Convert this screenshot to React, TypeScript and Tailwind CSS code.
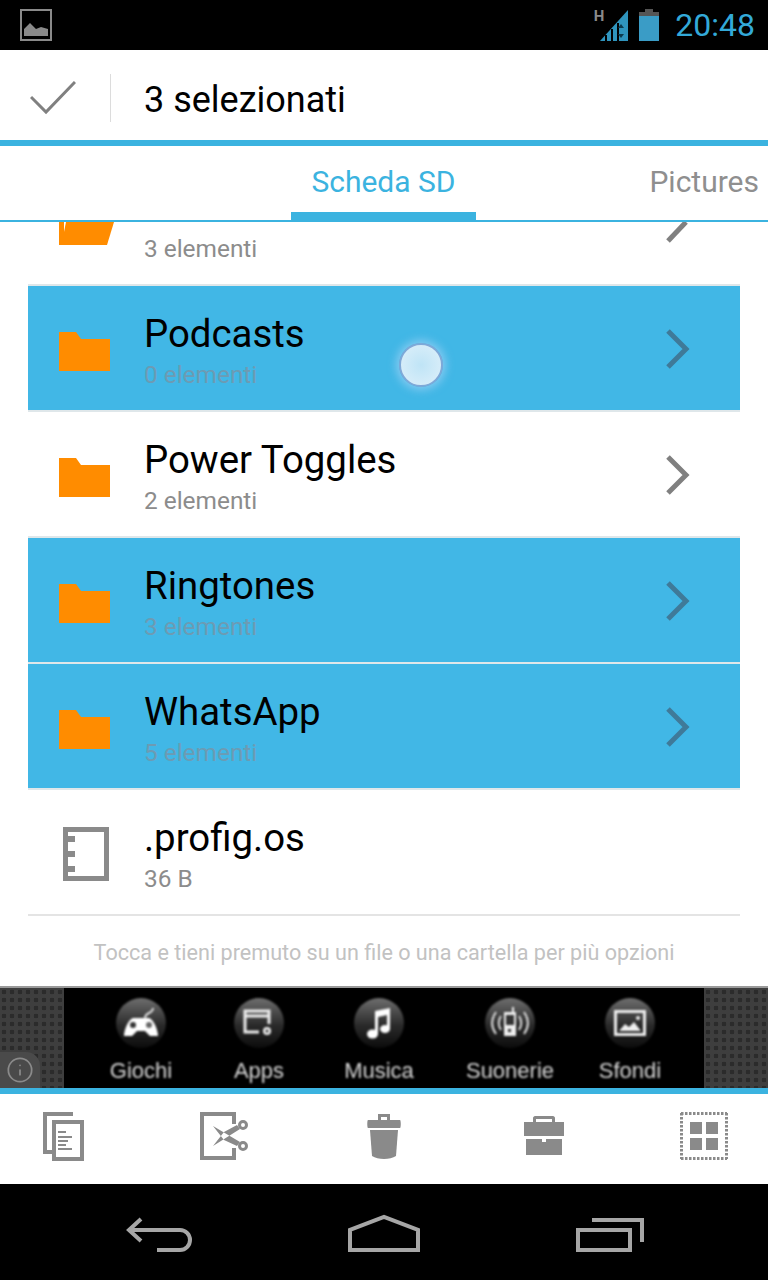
import { Info } from 'lucide-react';

const rows = [
    { name: 'Podcasts', sub: '0 elementi', selected: true },
    { name: 'Power Toggles', sub: '2 elementi', selected: false },
    { name: 'Ringtones', sub: '3 elementi', selected: true },
    { name: 'WhatsApp', sub: '5 elementi', selected: true },
];

function Chevron({ dark }: { dark?: boolean }) {
    return (
        <svg width="28" height="42" viewBox="0 0 28 42" fill="none" stroke={dark ? '#3f7a99' : '#808080'} strokeWidth="5" className="shrink-0">
            <path d="M4 3L22 21L4 39" />
        </svg>
    );
}

function Folder() {
    return (
        <svg width="52" height="40" viewBox="0 0 52 40" fill="#ff8c00" className="shrink-0">
            <path d="M0 0H17L22 7H51V39H0Z" />
        </svg>
    );
}

function FileRow({ name, sub, selected }: { name: string; sub: string; selected: boolean }) {
    return (
        <div className={`mx-[28px] h-[126px] border-b-2 border-[#dfe7ea] flex items-center ${selected ? 'bg-[#41b7e6]' : 'bg-white'}`}>
            <div className="w-[116px] pl-[31px] pt-[8px] flex shrink-0"><Folder /></div>
            <div className="flex-1 mt-[6px]">
                <div className="text-[38.4px] leading-[42px] text-black">{name}</div>
                <div className={`text-[24.4px] leading-[28px] mt-[6px] ${selected ? 'text-[#6d9bb3]' : 'text-[#8c8c8c]'}`}>{sub}</div>
            </div>
            <div className="pr-[48px] pt-[2px]"><Chevron dark={selected} /></div>
        </div>
    );
}

function AdItem({ label, width, children }: { label: string; width: string; children: React.ReactNode }) {
    return (
        <div className={`flex flex-col items-center ${width}`}>
            <div className="w-[50px] h-[50px] rounded-full bg-[linear-gradient(#6e6e6e,#2a2a2a_55%,#0c0c0c)] flex items-center justify-center">
                {children}
            </div>
            <div className="text-[22px] leading-[24px] mt-[11px] text-[#d8d8d8]">{label}</div>
        </div>
    );
}

function AdSide() {
    return <div className="w-[64px] shrink-0 bg-[#3e3e3e] bg-[radial-gradient(#2b2b2b_38%,transparent_46%)] bg-[length:8px_8px]" />;
}

export default function App() {
    return (
        <div className="relative w-[768px] h-[1280px] overflow-hidden bg-white font-['Roboto',sans-serif]">
            {/* status bar */}
            <div className="h-[50px] bg-black flex items-center justify-between pl-[20px] pr-[13px]">
                <svg width="32" height="32" viewBox="0 0 32 32" fill="none">
                    <rect x="1" y="1" width="30" height="30" stroke="#8a8a8a" strokeWidth="2" />
                    <path d="M4 27V20L10 14L16 20L21 18L28 20V27Z" fill="#8a8a8a" />
                </svg>
                <div className="flex items-center">
                    <span className="text-[15px] leading-[15px] font-bold text-[#8a8a8a] self-start mt-[4px] mr-[-6px]">H</span>
                    <svg width="30" height="32" viewBox="0 0 30 32" className="mt-[1px]">
                        <path d="M2 31L30 0V31Z" fill="#2f94bd" />
                        <path d="M8 31V25M14 31V19M20 31V13" stroke="#000" strokeWidth="2" />
                        <path d="M23 14L26 18H20ZM23 28L26 24H20Z" fill="#0d3a4d" />
                    </svg>
                    <svg width="20" height="32" viewBox="0 0 20 32" className="ml-[11px]">
                        <rect x="6" y="0" width="8" height="3" fill="#555" />
                        <rect x="0" y="3" width="20" height="4" fill="#555" />
                        <rect x="0" y="7" width="20" height="25" fill="#3a9cc6" />
                    </svg>
                    <span className="text-[32px] leading-[40px] text-[#33a9d8] ml-[16px]">20:48</span>
                </div>
            </div>

            {/* action mode bar */}
            <div className="h-[90px] pt-[6px] flex items-center">
                <div className="w-[110px] flex justify-center pr-[4px] shrink-0">
                    <svg width="46" height="34" viewBox="0 0 46 34" fill="none" stroke="#808080" strokeWidth="3">
                        <path d="M1 16L16 31L45 1" />
                    </svg>
                </div>
                <div className="w-[1px] h-[48px] bg-[#dcdcdc]" />
                <div className="ml-[33px] mt-[4px] text-[36px] text-black">3 selezionati</div>
            </div>
            <div className="h-[6px] bg-[#3bb3e0]" />

            {/* tabs */}
            <div className="relative h-[76px] border-b-2 border-[#3bb3e0] flex justify-end">
                <div className="absolute left-[291px] bottom-0 w-[185px] h-[8px] bg-[#3bb3e0]" />
                <div className="absolute left-[291px] w-[185px] top-[14px] text-center text-[30px] leading-[44px] text-[#3bb3e0]">Scheda SD</div>
                <div className="pr-[9px] pt-[14px] text-[30px] leading-[44px] text-[#8f8f8f]">Pictures</div>
            </div>

            {/* list */}
            <div className="h-[764px] overflow-hidden">
                <div className="mx-[28px] h-[64px] border-b-2 border-[#dfe7ea] flex">
                    <div className="w-[116px] pl-[31px] shrink-0">
                        <svg width="56" height="24" viewBox="0 0 56 24" fill="#ff8c00" className="block">
                            <path d="M0 0H55L48 23H0Z" />
                            <path d="M5 0H7L5 10Z" fill="#fff" />
                        </svg>
                    </div>
                    <div className="flex-1 text-[24.4px] leading-[28px] text-[#8c8c8c] mt-[13px]">3 elementi</div>
                    <div className="pr-[48px]">
                        <svg width="28" height="22" viewBox="0 0 28 22" fill="none" stroke="#808080" strokeWidth="5" className="block">
                            <path d="M22 0L4 19" />
                        </svg>
                    </div>
                </div>
                {rows.map((row) => (
                    <FileRow key={row.name} {...row} />
                ))}
                <div className="mx-[28px] h-[126px] border-b-2 border-[#e4e4e4] flex items-center">
                    <div className="w-[116px] pl-[35px] pt-[4px] flex shrink-0">
                        <svg width="46" height="54" viewBox="0 0 46 54" fill="none">
                            <rect x="2.5" y="2.5" width="41" height="49" stroke="#8a8a8a" strokeWidth="5" />
                            <path d="M2 9H12V15H2ZM2 24H12V30H2ZM2 39H12V45H2Z" fill="#8a8a8a" />
                        </svg>
                    </div>
                    <div className="flex-1 mt-[6px]">
                        <div className="text-[38.4px] leading-[42px] text-black">.profig.os</div>
                        <div className="text-[24.4px] leading-[28px] mt-[6px] text-[#8c8c8c]">36 B</div>
                    </div>
                </div>
                <div className="text-center text-[21.6px] leading-[28px] pt-[23px] text-[#c2c2c2]">Tocca e tieni premuto su un file o una cartella per più opzioni</div>
            </div>

            {/* ad banner */}
            <div className="relative h-[102px] border-t-2 border-[#9a9a9a] bg-black flex font-['Liberation_Sans',sans-serif]">
                <AdSide />
                <div className="flex-1 pl-[18px] pt-[10px] flex blur-[0.8px]">
                    <AdItem label="Giochi" width="w-[118px]">
                        <svg width="36" height="34" viewBox="0 0 36 34" fill="#fff">
                            <path d="M22 12C22 6 30 8 30 2" fill="none" stroke="#ddd" strokeWidth="2" />
                            <path d="M10 12H26C31 14 35 24 35 30H27L22 25H14L9 30H1C1 24 5 14 10 12Z" />
                            <circle cx="10" cy="19" r="3" fill="#333" />
                            <circle cx="26" cy="19" r="3" fill="#666" />
                        </svg>
                    </AdItem>
                    <AdItem label="Apps" width="w-[118px]">
                        <svg width="32" height="30" viewBox="0 0 32 30" fill="none" stroke="#eee" strokeWidth="3">
                            <path d="M26 16V3H2V24H16M2 8H26" />
                            <circle cx="24" cy="23" r="4" fill="#eee" stroke="none" />
                            <circle cx="24" cy="23" r="1.5" fill="#333" stroke="none" />
                        </svg>
                    </AdItem>
                    <AdItem label="Musica" width="w-[122px]">
                        <svg width="28" height="32" viewBox="0 0 28 32" fill="#fff">
                            <path d="M10 4L25 1V22H22V8L13 10V27H10Z" />
                            <ellipse cx="7.5" cy="27" rx="5.5" ry="4.5" />
                            <ellipse cx="20" cy="22" rx="5" ry="4" />
                        </svg>
                    </AdItem>
                    <AdItem label="Suonerie" width="w-[140px]">
                        <svg width="44" height="42" viewBox="0 0 44 42" fill="none" stroke="#ddd" strokeWidth="2">
                            <path d="M8 10C3 17 3 25 8 32M36 10C41 17 41 25 36 32M13 14C10 18 10 24 13 28M31 14C34 18 34 24 31 28" />
                            <rect x="16" y="10" width="12" height="24" fill="#eee" stroke="none" />
                            <rect x="18" y="13" width="8" height="10" fill="#333" stroke="none" />
                            <rect x="24" y="5" width="2" height="6" fill="#eee" stroke="none" />
                            <rect x="20" y="27" width="3" height="3" fill="#333" stroke="none" />
                        </svg>
                    </AdItem>
                    <AdItem label="Sfondi" width="w-[100px]">
                        <svg width="32" height="26" viewBox="0 0 32 26" fill="none">
                            <rect x="1.5" y="1.5" width="29" height="23" stroke="#eee" strokeWidth="3" />
                            <path d="M5 21L11 14L15 17L20 12L27 21Z" fill="#eee" />
                            <circle cx="24" cy="8" r="2" fill="#eee" />
                        </svg>
                    </AdItem>
                </div>
                <AdSide />
                <div className="absolute left-0 bottom-0 w-[40px] h-[36px] rounded-tr-[14px] bg-[#4a4a4a] flex items-center justify-center">
                    <Info size={28} strokeWidth={1.5} className="text-[#8a8a8a]" />
                </div>
            </div>
            <div className="h-[6px] bg-[#3bb3e0]" />

            {/* bottom actions */}
            <div className="h-[90px] flex justify-between items-start px-[40px] pt-[18px]">
                <svg width="48" height="50" viewBox="0 0 48 50" fill="none" stroke="#8a8a8a">
                    <path d="M33 2H5V40H12" strokeWidth="4" />
                    <rect x="14" y="10" width="28" height="37" strokeWidth="4" />
                    <path d="M18 20H26M18 25H32M18 29H28M18 33H26M18 37H32" strokeWidth="2" />
                </svg>
                <svg width="48" height="48" viewBox="0 0 48 48" fill="none" stroke="#8a8a8a">
                    <path d="M34 12V2H2V46H34V36" strokeWidth="4" />
                    <path d="M13 14L40 30L37 34L24 28ZM13 34L40 17L37 13L24 20Z" fill="#8a8a8a" stroke="none" />
                    <circle cx="43" cy="13" r="3.5" strokeWidth="3" />
                    <circle cx="43" cy="34" r="3.5" strokeWidth="3" />
                </svg>
                <svg width="48" height="48" viewBox="0 0 48 48" fill="#8a8a8a">
                    <path d="M18 8V2H30V8H27V5H21V8Z" />
                    <path d="M8 8H40C41 8 41 16 40 16H8C7 16 7 8 8 8Z" />
                    <path d="M10 18H38L36 44C30 48 18 48 12 44Z" />
                </svg>
                <svg width="48" height="48" viewBox="0 0 48 48" fill="#8a8a8a">
                    <path d="M13 11V6C13 5 14 4 15 4H33C34 4 35 5 35 6V11H32V7H16V11Z" />
                    <rect x="4" y="10" width="40" height="14" />
                    <rect x="6" y="27" width="36" height="16" />
                    <rect x="22" y="24" width="4" height="6" fill="#fff" />
                </svg>
                <svg width="48" height="48" viewBox="0 0 48 48" fill="#8a8a8a">
                    <path d="M1 1.5H47M1 46.5H47M1.5 1V47M46.5 1V47" stroke="#8a8a8a" strokeWidth="3" strokeDasharray="2.5 1.5" fill="none" />
                    <rect x="10" y="10" width="12" height="12" />
                    <rect x="26" y="10" width="12" height="12" />
                    <rect x="10" y="26" width="12" height="12" />
                    <rect x="26" y="26" width="12" height="12" />
                </svg>
            </div>

            {/* nav bar */}
            <div className="h-[96px] bg-black flex justify-between items-start pl-[126px] pr-[122px] pt-[30px]">
                <svg width="68" height="40" viewBox="0 0 68 40" fill="none" stroke="#a6a6a6" strokeWidth="4">
                    <path d="M31 36H54A10 10 0 0 0 54 16H3M15 5L3 16L15 27" />
                </svg>
                <svg width="76" height="40" viewBox="0 0 76 40" fill="none" stroke="#a6a6a6" strokeWidth="4">
                    <path d="M4 36V16L38 3L72 16V36Z" />
                </svg>
                <svg width="72" height="40" viewBox="0 0 72 40" fill="none" stroke="#a6a6a6" strokeWidth="4">
                    <rect x="4" y="16" width="52" height="20" />
                    <path d="M18 6H68V28" />
                </svg>
            </div>

            {/* touch indicator */}
            <div className="absolute left-[399px] top-[343px] w-[44px] h-[44px] rounded-full border-2 border-[#7fa9d8] bg-[radial-gradient(#bfe4f6,#dff0fa)] shadow-[0_0_8px_3px_rgba(160,210,245,0.7)]" />
        </div>
    );
}
